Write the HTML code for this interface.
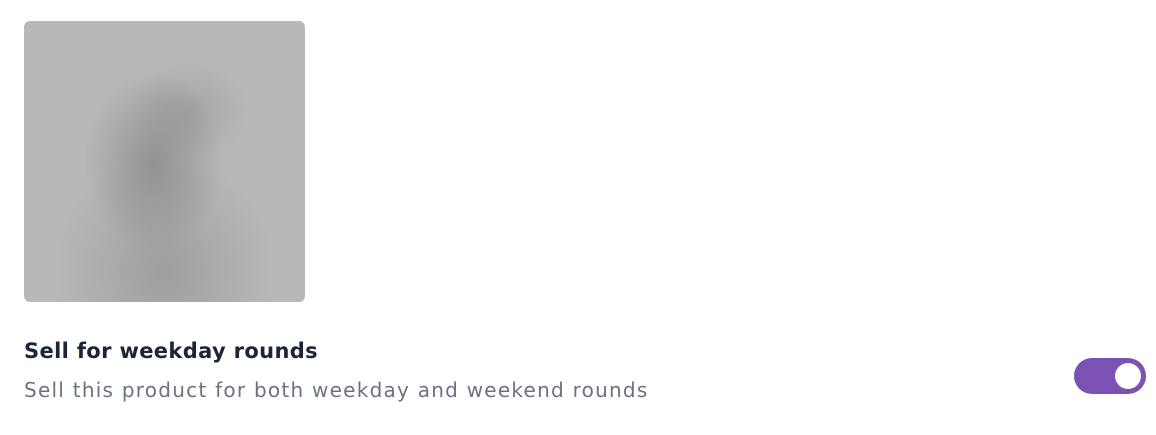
<!DOCTYPE html>
<html><head><style>
html,body{margin:0;padding:0;background:#fff;width:1156px;height:435px;overflow:hidden}
.img{position:absolute;left:24px;top:21px;width:281px;height:281px;border-radius:6px;
background:
radial-gradient(ellipse 70px 90px at 130px 140px,rgba(110,110,110,.5),rgba(110,110,110,0) 100%),
radial-gradient(ellipse 110px 120px at 140px 250px,rgba(120,120,120,.4),rgba(120,120,120,0) 100%),
radial-gradient(ellipse 60px 50px at 165px 90px,rgba(120,120,120,.3),rgba(120,120,120,0) 100%),
#b8b8b8;}
.t{position:absolute;left:24px;top:339px;font:bold 21px "DejaVu Sans",sans-serif;color:#1c2537;letter-spacing:0.35px;white-space:nowrap}
.s{position:absolute;left:24px;top:378px;font:20px "DejaVu Sans",sans-serif;color:#6b7280;letter-spacing:1.25px;white-space:nowrap}
.tg{position:absolute;left:1074px;top:358px;width:72px;height:36px;border-radius:18px;background:#7b52b3}
.k{position:absolute;left:1115px;top:363px;width:26px;height:26px;border-radius:50%;background:#fff}
</style></head><body>
<div class="img"></div>
<div class="t">Sell for weekday rounds</div>
<div class="s">Sell this product for both weekday and weekend rounds</div>
<div class="tg"></div><div class="k"></div>
</body></html>
